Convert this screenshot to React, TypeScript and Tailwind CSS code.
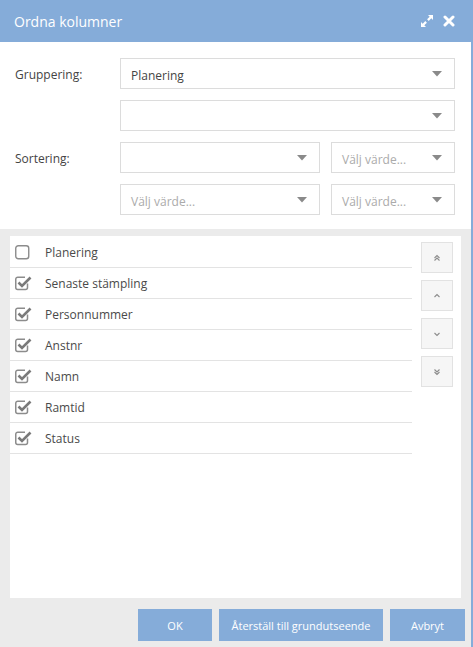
import React from "react";

const Arrow = () => (
  <svg width="10" height="6" viewBox="0 0 10 6" className="shrink-0">
    <path d="M0 0 L10 0 L5 5.5 Z" fill="#8a8a8a" />
  </svg>
);

function Select({ value, placeholder, className }: { value?: string; placeholder?: string; className?: string }) {
  return (
    <div className={"h-[31px] border border-[#dcdcdc] bg-white flex items-center justify-between pl-[10px] pr-[12px] " + (className || "")}>
      {value ? (
        <span className="text-[12px] text-[#444] pt-[4px]">{value}</span>
      ) : placeholder ? (
        <span className="text-[12px] text-[#ababab] pt-[4px]">{placeholder}</span>
      ) : (
        <span />
      )}
      <Arrow />
    </div>
  );
}

const Unchecked = () => (
  <svg width="17" height="16" viewBox="0 0 17 16" className="shrink-0">
    <rect x="0.75" y="1.75" width="13" height="13" rx="2.5" fill="none" stroke="#8c8c8c" strokeWidth="1.4" />
  </svg>
);

const Checked = () => (
  <svg width="17" height="16" viewBox="0 0 17 16" className="shrink-0">
    <path d="M12.5 8.5 V12.5 A2 2 0 0 1 10.5 14.5 H2.75 A2 2 0 0 1 0.75 12.5 V4.25 A2 2 0 0 1 2.75 2.25 H10" fill="none" stroke="#8c8c8c" strokeWidth="1.5" />
    <path d="M3.5 7.5 L7 11 L15.5 2.5" fill="none" stroke="#7a7a7a" strokeWidth="2.6" strokeLinejoin="miter" />
  </svg>
);

const items = [
  { label: "Planering", checked: false },
  { label: "Senaste stämpling", checked: true },
  { label: "Personnummer", checked: true },
  { label: "Anstnr", checked: true },
  { label: "Namn", checked: true },
  { label: "Ramtid", checked: true },
  { label: "Status", checked: true },
];

function MoveBtn({ d }: { d: string }) {
  return (
    <div className="w-[32px] h-[31px] bg-[#f6f6f6] border border-[#e2e2e2] flex items-center justify-center">
      <svg width="10" height="10" viewBox="0 0 10 10">
        <path d={d} fill="none" stroke="#8c8c8c" strokeWidth="1.1" />
      </svg>
    </div>
  );
}

export default function App() {
  return (
    <div className="w-[473px] h-[647px] flex flex-col bg-[#ebebeb] border-r-2 border-[#85acd9] overflow-hidden" style={{ fontFamily: '"Open Sans", "Liberation Sans", sans-serif' }}>
      <div className="h-[42px] bg-[#85acd9] flex items-center justify-between pl-[14px] pr-[16px] shrink-0">
        <span className="text-[14px] text-white">Ordna kolumner</span>
        <div className="flex items-center gap-[9px]">
          <svg width="14" height="14" viewBox="0 0 14 14">
            <path d="M8 1 H13 V6 L11.3 4.3 L8.7 6.9 L7.1 5.3 L9.7 2.7 Z" fill="white" />
            <path d="M6 13 H1 V8 L2.7 9.7 L5.3 7.1 L6.9 8.7 L4.3 11.3 Z" fill="white" />
          </svg>
          <svg width="12" height="12" viewBox="0 0 12 12">
            <path d="M2 2 L10 10 M10 2 L2 10" stroke="white" strokeWidth="3" strokeLinecap="round" />
          </svg>
        </div>
      </div>

      <div className="bg-white pt-[16px] pb-[14px] pl-[15px] pr-[16px] shrink-0">
        <div className="grid grid-cols-[94px_200px_124px] gap-x-[11px] gap-y-[11px] items-center">
          <span className="text-[12px] text-[#444] pt-[3px]">Gruppering:</span>
          <Select value="Planering" className="col-span-2" />
          <span />
          <Select className="col-span-2" />
          <span className="text-[12px] text-[#444] pt-[3px]">Sortering:</span>
          <Select />
          <Select placeholder="Välj värde..." />
          <span />
          <Select placeholder="Välj värde..." />
          <Select placeholder="Välj värde..." />
        </div>
      </div>

      <div className="px-[10px] pt-[7px] shrink-0">
        <div className="h-[362px] bg-white flex items-start">
          <div className="w-[402px] flex flex-col pt-[1px]">
            {items.map((it) => (
              <div key={it.label} className="h-[31px] border-b border-[#e3e3e3] flex items-center pl-[5px]">
                {it.checked ? <Checked /> : <Unchecked />}
                <span className="ml-[13px] text-[12px] text-[#4a4a4a] pt-[1px]">{it.label}</span>
              </div>
            ))}
          </div>
          <div className="ml-[9px] mt-[6px] flex flex-col gap-[7px]">
            <MoveBtn d="M2.5 5 L5 2.5 L7.5 5 M2.5 7.5 L5 5 L7.5 7.5" />
            <MoveBtn d="M2.5 6 L5 3.5 L7.5 6" />
            <MoveBtn d="M2.5 4 L5 6.5 L7.5 4" />
            <MoveBtn d="M2.5 2.5 L5 5 L7.5 2.5 M2.5 5 L5 7.5 L7.5 5" />
          </div>
        </div>
      </div>

      <div className="flex justify-end gap-[7px] pt-[11px] pr-[6px]">
        <div className="w-[74px] h-[32px] bg-[#85acd9] flex items-center justify-center text-[11px] text-white pt-[2px]">OK</div>
        <div className="w-[164px] h-[32px] bg-[#85acd9] flex items-center justify-center text-[11px] text-white pt-[2px]">Återställ till grundutseende</div>
        <div className="w-[75px] h-[32px] bg-[#85acd9] flex items-center justify-center text-[11px] text-white pt-[2px]">Avbryt</div>
      </div>
    </div>
  );
}
